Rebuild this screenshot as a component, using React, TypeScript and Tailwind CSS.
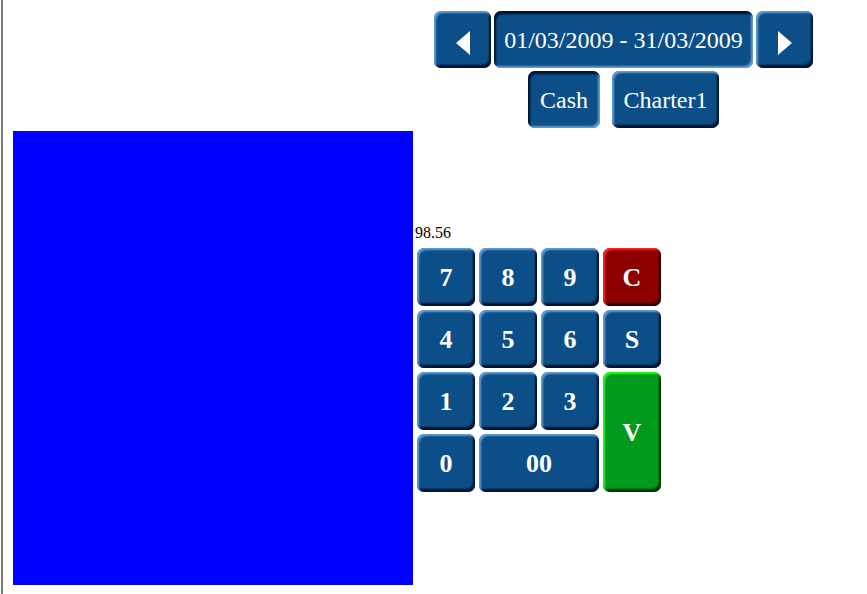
import React from "react";

const serif = "font-['Liberation_Serif',serif]";

const blueRaised =
  "bg-[#0c4e87] shadow-[inset_2px_2px_2px_rgba(130,185,240,0.75),inset_-2px_-3px_2px_rgba(0,12,35,0.9)]";
const blueSunken =
  "bg-[#0c4e87] shadow-[inset_2px_3px_2px_rgba(0,12,35,0.9),inset_-2px_-2px_2px_rgba(130,185,240,0.75)]";
const redRaised =
  "bg-[#8c0000] shadow-[inset_2px_2px_2px_rgba(255,40,40,0.95),inset_-2px_-3px_2px_rgba(40,0,0,0.9)]";
const greenRaised =
  "bg-[#009a1c] shadow-[inset_2px_2px_2px_rgba(40,255,40,0.95),inset_-2px_-3px_2px_rgba(0,40,0,0.9)]";

function Arrow({ dir }: { dir: "left" | "right" }) {
  return (
    <svg width="14" height="24" viewBox="0 0 14 24" className="mt-[6px]">
      {dir === "left" ? (
        <polygon points="14,0 14,24 0,12" fill="#fff" />
      ) : (
        <polygon points="0,0 0,24 14,12" fill="#fff" />
      )}
    </svg>
  );
}

function Key({
  label,
  tone = "blue",
  className = "",
}: {
  label: string;
  tone?: "blue" | "red" | "green";
  className?: string;
}) {
  const skin = tone === "red" ? redRaised : tone === "green" ? greenRaised : blueRaised;
  return (
    <button
      className={`flex items-center justify-center rounded-[7px] text-[26px] font-bold text-white ${skin} ${className}`}
    >
      {label}
    </button>
  );
}

export default function App() {
  return (
    <div className={`min-h-screen bg-white ml-px border-l-2 border-[#7a7a7a] pl-[10px] pt-[11px] ${serif}`}>
      <div className="flex">
        <div className="w-[400px] shrink-0" />
        <div className="flex w-[421px] flex-col items-center gap-[3px]">
          <div className="flex gap-[3px]">
            <button className={`flex h-[57px] w-[57px] items-center justify-center rounded-[7px] ${blueRaised}`}>
              <Arrow dir="left" />
            </button>
            <button className={`flex h-[57px] w-[259px] items-center justify-center rounded-[7px] text-[24px] text-white ${blueSunken}`}>
              01/03/2009 - 31/03/2009
            </button>
            <button className={`flex h-[57px] w-[57px] items-center justify-center rounded-[7px] ${blueRaised}`}>
              <Arrow dir="right" />
            </button>
          </div>
          <div className="flex gap-[12px]">
            <button className={`flex h-[57px] w-[72px] items-center justify-center rounded-[7px] text-[24px] text-white ${blueSunken}`}>
              Cash
            </button>
            <button className={`flex h-[57px] w-[107px] items-center justify-center rounded-[7px] text-[24px] text-white ${blueRaised}`}>
              Charter1
            </button>
          </div>
        </div>
      </div>

      <div className="mt-[3px] flex">
        <div className="h-[454px] w-[400px] shrink-0 bg-[#0000ff]" />
        <div className="ml-[2px] flex flex-col self-center">
          <div className="h-[18px] text-[16px] leading-[18px] text-black">98.56</div>
          <div className="ml-[2px] mt-[6px] grid grid-cols-[repeat(4,58px)] auto-rows-[58px] gap-[4px]">
            <Key label="7" />
            <Key label="8" />
            <Key label="9" />
            <Key label="C" tone="red" />
            <Key label="4" />
            <Key label="5" />
            <Key label="6" />
            <Key label="S" />
            <Key label="1" />
            <Key label="2" />
            <Key label="3" />
            <Key label="V" tone="green" className="row-span-2" />
            <Key label="0" />
            <Key label="00" className="col-span-2" />
          </div>
        </div>
      </div>
    </div>
  );
}
